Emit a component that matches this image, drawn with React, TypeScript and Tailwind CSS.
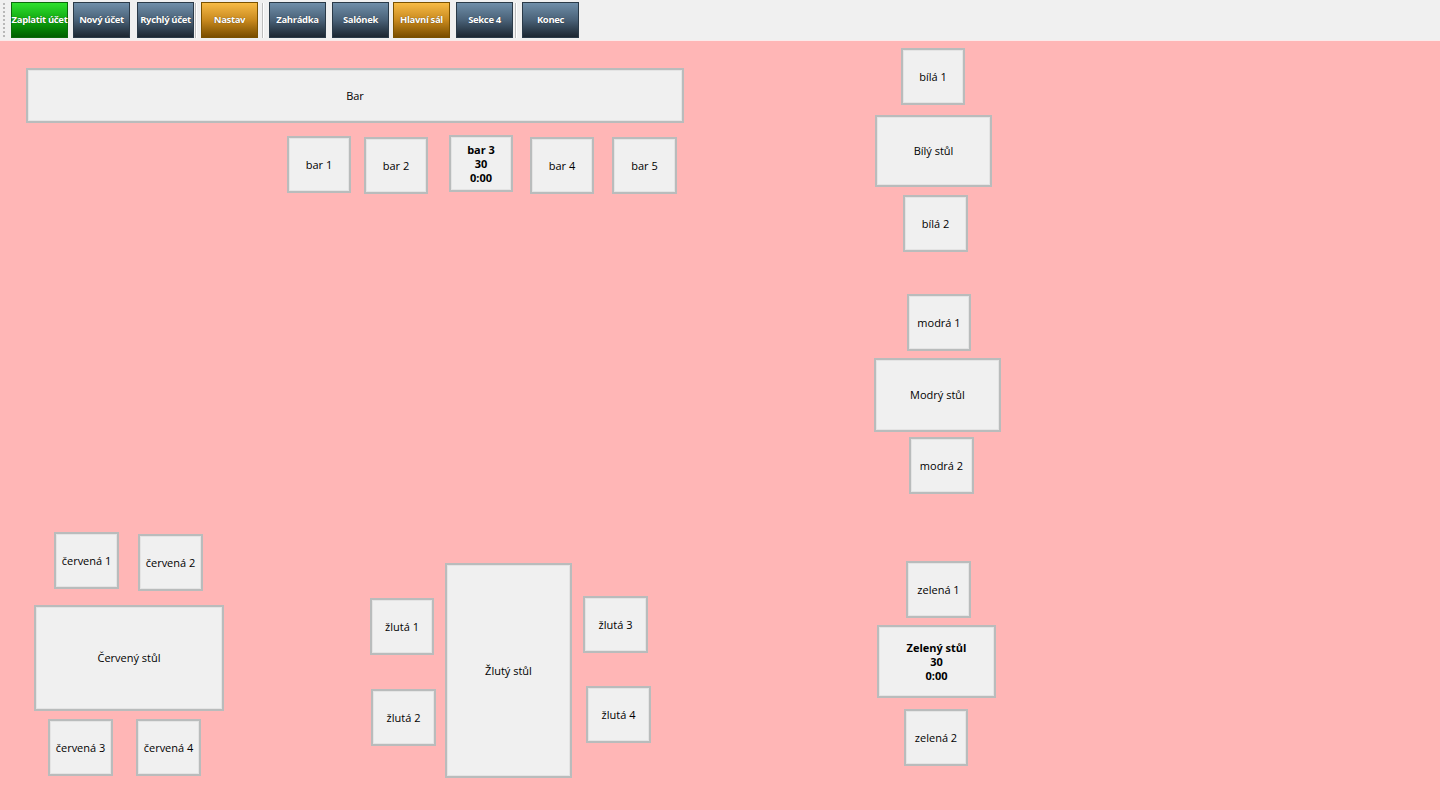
import React from "react";

type Item =
  | { type: "btn"; label: string; cls: string }
  | { type: "sep"; cls: string };

const green = "bg-gradient-to-b from-[#2ee02e] via-[#10a810] to-[#005f00] border-[#0a6a0a]";
const dark = "bg-gradient-to-b from-[#6f8ea9] via-[#4a6278] to-[#1c2732] border-[#2a3a48]";
const orange = "bg-gradient-to-b from-[#f7bb45] via-[#c98a1e] to-[#7a4e00] border-[#7a5200]";

const items: Item[] = [
  { type: "btn", label: "Zaplatit účet", cls: `ml-[6px] ${green}` },
  { type: "btn", label: "Nový účet", cls: `ml-[5px] ${dark}` },
  { type: "btn", label: "Rychlý účet", cls: `ml-[7px] ${dark}` },
  { type: "sep", cls: "ml-[1px]" },
  { type: "btn", label: "Nastav", cls: `ml-[4px] ${orange}` },
  { type: "sep", cls: "ml-[4px]" },
  { type: "btn", label: "Zahrádka", cls: `ml-[5px] ${dark}` },
  { type: "btn", label: "Salónek", cls: `ml-[6px] ${dark}` },
  { type: "btn", label: "Hlavní sál", cls: `ml-[4px] ${orange}` },
  { type: "btn", label: "Sekce 4", cls: `ml-[6px] ${dark}` },
  { type: "sep", cls: "ml-[2px]" },
  { type: "btn", label: "Konec", cls: `ml-[5px] ${dark}` },
];

type T = { label: string; pos: string; lines?: string[] };

// Free-canvas table nodes: position on the floor plan is the content itself.
const tables: T[] = [
  { label: "Bar", pos: "left-[26px] top-[27px] w-[658px] h-[55px]" },
  { label: "bar 1", pos: "left-[287px] top-[95px] w-[64px] h-[57px]" },
  { label: "bar 2", pos: "left-[364px] top-[96px] w-[64px] h-[57px]" },
  { label: "bar 3", pos: "left-[449px] top-[94px] w-[64px] h-[57px]", lines: ["bar 3", "30", "0:00"] },
  { label: "bar 4", pos: "left-[530px] top-[96px] w-[64px] h-[57px]" },
  { label: "bar 5", pos: "left-[612px] top-[96px] w-[65px] h-[57px]" },
  { label: "bílá 1", pos: "left-[901px] top-[7px] w-[64px] h-[57px]" },
  { label: "Bílý stůl", pos: "left-[875px] top-[74px] w-[117px] h-[72px]" },
  { label: "bílá 2", pos: "left-[903px] top-[154px] w-[65px] h-[57px]" },
  { label: "modrá 1", pos: "left-[907px] top-[253px] w-[64px] h-[57px]" },
  { label: "Modrý stůl", pos: "left-[874px] top-[317px] w-[127px] h-[74px]" },
  { label: "modrá 2", pos: "left-[909px] top-[396px] w-[65px] h-[57px]" },
  { label: "zelená 1", pos: "left-[906px] top-[520px] w-[65px] h-[57px]" },
  { label: "Zelený stůl", pos: "left-[877px] top-[584px] w-[119px] h-[73px]", lines: ["Zelený stůl", "30", "0:00"] },
  { label: "zelená 2", pos: "left-[904px] top-[668px] w-[64px] h-[57px]" },
  { label: "červená 1", pos: "left-[54px] top-[491px] w-[65px] h-[57px]" },
  { label: "červená 2", pos: "left-[138px] top-[493px] w-[65px] h-[57px]" },
  { label: "Červený stůl", pos: "left-[34px] top-[564px] w-[190px] h-[106px]" },
  { label: "červená 3", pos: "left-[48px] top-[678px] w-[65px] h-[57px]" },
  { label: "červená 4", pos: "left-[136px] top-[678px] w-[65px] h-[57px]" },
  { label: "žlutá 1", pos: "left-[370px] top-[557px] w-[64px] h-[57px]" },
  { label: "Žlutý stůl", pos: "left-[445px] top-[522px] w-[127px] h-[215px]" },
  { label: "žlutá 2", pos: "left-[371px] top-[648px] w-[65px] h-[57px]" },
  { label: "žlutá 3", pos: "left-[583px] top-[555px] w-[65px] h-[57px]" },
  { label: "žlutá 4", pos: "left-[586px] top-[645px] w-[65px] h-[57px]" },
];

export default function App() {
  return (
    <div className="w-[1440px] h-[810px] flex flex-col overflow-hidden bg-[#ffb6b6] font-['Open_Sans','Noto_Sans',sans-serif]">
      <div className="h-[41px] shrink-0 bg-[#f0f0f0] border-b border-[#fbeaea] flex items-start pt-[2px]">
        <div className="ml-[3px] mt-[1px] h-[34px] w-[2px] border-l-2 border-dotted border-[#b8b8b8]" />
        {items.map((it, i) =>
          it.type === "sep" ? (
            <div key={i} className={`mt-[1px] h-[35px] w-[2px] border-l border-[#bdbdbd] border-r border-r-white ${it.cls}`} />
          ) : (
            <div
              key={i}
              className={`w-[57px] h-[36px] shrink-0 border flex items-center justify-center text-white font-bold text-[9.5px] tracking-[-0.35px] whitespace-nowrap [text-shadow:0_0_1px_rgba(0,0,0,0.6)] ${it.cls}`}
            >
              {it.label}
            </div>
          )
        )}
      </div>
      <div className="relative flex-1">
        {tables.map((t) => (
          <div
            key={t.label}
            className={`absolute bg-[#f0f0f0] border-2 border-[#b9bcbc] shadow-[inset_0_0_0_1px_#e4e4e4] flex flex-col items-center justify-center text-[11px] leading-[14px] text-black ${t.lines ? "font-bold" : ""} ${t.pos}`}
          >
            {t.lines ? t.lines.map((l) => <span key={l}>{l}</span>) : <span>{t.label}</span>}
          </div>
        ))}
      </div>
    </div>
  );
}
